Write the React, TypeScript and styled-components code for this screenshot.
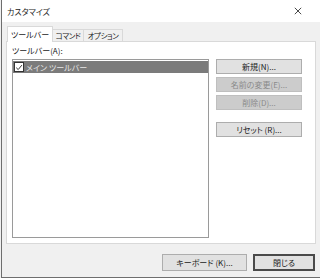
import { useState } from "react";
import styled, { createGlobalStyle } from "styled-components";

const GlobalStyle = createGlobalStyle`
    html, body {
        margin: 0;
        padding: 0;
        background: #f0f0f0;
    }
    body {
        font-family: "Noto Sans CJK JP", "Noto Sans", sans-serif;
        font-feature-settings: "palt";
        color: #000;
    }
`;

const tabs = [
    { label: "ツールバー", width: 46 },
    { label: "コマンド", width: 32 },
    { label: "オプション", width: 40 },
];

const actions = [
    { label: "新規(N)...", disabled: false },
    { label: "名前の変更(E)...", disabled: true },
    { label: "削除(D)...", disabled: true },
    { label: "リセット (R)...", disabled: false, separated: true },
];

const App = () => {
    const [activeTab, setActiveTab] = useState(0);
    const [checked, setChecked] = useState(true);

    return (
        <>
            <GlobalStyle />
            <Window>
                <TitleBar>
                    <Title>カスタマイズ</Title>
                    <CloseIcon viewBox="0 0 10 10">
                        <path d="M1 1 L9 9 M9 1 L1 9" stroke="#1a1a1a" strokeWidth="1" />
                    </CloseIcon>
                </TitleBar>

                <Body>
                    <TabRow>
                        {tabs.map((tab, idx) => (
                            <Tab
                                key={tab.label}
                                $active={idx === activeTab}
                                $width={tab.width}
                                onClick={() => setActiveTab(idx)}
                            >
                                {tab.label}
                            </Tab>
                        ))}
                    </TabRow>

                    <Panel>
                        <ListColumn>
                            <Label>ツールバー(A):</Label>
                            <ListBox>
                                <ListItem>
                                    <CheckBox onClick={() => setChecked(!checked)}>
                                        {checked && (
                                            <svg viewBox="0 0 10 10" width="9" height="9">
                                                <path
                                                    d="M1.5 5.2 L4 7.6 L8.6 2"
                                                    fill="none"
                                                    stroke="#1a1a1a"
                                                    strokeWidth="1.1"
                                                />
                                            </svg>
                                        )}
                                    </CheckBox>
                                    <ItemText>メイン ツールバー</ItemText>
                                </ListItem>
                            </ListBox>
                        </ListColumn>

                        <ButtonColumn>
                            {actions.map((action) => (
                                <SideButton
                                    key={action.label}
                                    disabled={action.disabled}
                                    $separated={action.separated}
                                >
                                    {action.label}
                                </SideButton>
                            ))}
                        </ButtonColumn>
                    </Panel>

                    <Footer>
                        <FooterButton $width={85}>キーボード (K)...</FooterButton>
                        <FooterButton $width={62} $default>
                            閉じる
                        </FooterButton>
                    </Footer>
                </Body>
            </Window>
        </>
    );
};

export default App;

const Window = styled.div`
    box-sizing: border-box;
    width: 320px;
    height: 278px;
    margin-left: 1px;
    border-left: 1px solid #6e6e6e;
    border-bottom: 1px solid #6e6e6e;
    display: flex;
    flex-direction: column;
    background: #f0f0f0;
    overflow: hidden;
`;

const TitleBar = styled.div`
    height: 22px;
    flex-shrink: 0;
    background: #ffffff;
    display: flex;
    align-items: center;
    justify-content: space-between;
    padding: 0 19px 0 5px;
`;

const Title = styled.span`
    font-size: 8px;
    color: #1a1a1a;
`;

const CloseIcon = styled.svg`
    width: 8px;
    height: 8px;
`;

const Body = styled.div`
    flex: 1;
    display: flex;
    flex-direction: column;
    padding: 0 5px 0 4px;
`;

const TabRow = styled.div`
    display: flex;
    align-items: flex-end;
    height: 16px;
    margin-top: 4px;
    position: relative;
    z-index: 1;
    margin-bottom: -1px;
`;

const Tab = styled.div<{ $active?: boolean; $width: number }>`
    box-sizing: border-box;
    width: ${(p) => p.$width}px;
    height: ${(p) => (p.$active ? "16px" : "13px")};
    margin-left: ${(p) => (p.$active ? "0" : "-1px")};
    background: ${(p) => (p.$active ? "#ffffff" : "#f0f0f0")};
    border: 1px solid #d9d9d9;
    border-bottom: ${(p) => (p.$active ? "none" : "1px solid #d9d9d9")};
    display: flex;
    align-items: center;
    justify-content: center;
    white-space: nowrap;
    font-size: ${(p) => (p.$active ? "8px" : "7.5px")};
    letter-spacing: ${(p) => (p.$active ? "0" : "-0.4px")};
    color: #1a1a1a;
    cursor: default;
    &:first-child {
        margin-left: 1px;
    }
`;

const Panel = styled.div`
    box-sizing: border-box;
    height: 203px;
    background: #ffffff;
    border: 1px solid #d9d9d9;
    display: flex;
    gap: 7px;
    padding: 0 9px 0 5px;
`;

const ListColumn = styled.div`
    display: flex;
    flex-direction: column;
    width: 197px;
`;

const Label = styled.div`
    height: 17px;
    display: flex;
    align-items: center;
    font-size: 8px;
    color: #1a1a1a;
`;

const ListBox = styled.div`
    box-sizing: border-box;
    height: 179px;
    border: 1px solid #9a9a9a;
    background: #ffffff;
    padding: 1px 0 0;
`;

const ListItem = styled.div`
    height: 12px;
    background: #7b7b7b;
    display: flex;
    align-items: center;
    gap: 2px;
    padding-left: 1px;
`;

const CheckBox = styled.div`
    box-sizing: border-box;
    width: 10px;
    height: 10px;
    background: #ffffff;
    border: 1px solid #333333;
    display: flex;
    align-items: center;
    justify-content: center;
`;

const ItemText = styled.span`
    font-size: 8px;
    color: #e6e6e6;
`;

const ButtonColumn = styled.div`
    display: flex;
    flex-direction: column;
    gap: 3px;
    padding-top: 17px;
    width: 86px;
`;

const SideButton = styled.button<{ $separated?: boolean }>`
    box-sizing: border-box;
    height: 15px;
    margin-top: ${(p) => (p.$separated ? "9px" : "0")};
    padding: 0;
    background: #e1e1e1;
    border: 1px solid #adadad;
    font-family: inherit;
    font-feature-settings: "palt";
    font-size: 8px;
    color: #1a1a1a;
    display: flex;
    align-items: center;
    justify-content: center;
    &:disabled {
        background: #cccccc;
        border-color: #bfbfbf;
        color: #8a8a8a;
    }
`;

const Footer = styled.div`
    flex: 1;
    display: flex;
    justify-content: flex-end;
    align-items: flex-start;
    gap: 6px;
    padding-top: 10px;
    padding-right: 1px;
`;

const FooterButton = styled.button<{ $width: number; $default?: boolean }>`
    box-sizing: border-box;
    width: ${(p) => p.$width}px;
    height: 17px;
    padding: 0;
    background: #e1e1e1;
    border: ${(p) => (p.$default ? "2px solid #4a4a4a" : "1px solid #adadad")};
    font-family: inherit;
    font-feature-settings: "palt";
    font-size: 8px;
    color: #1a1a1a;
    display: flex;
    align-items: center;
    justify-content: center;
`;
